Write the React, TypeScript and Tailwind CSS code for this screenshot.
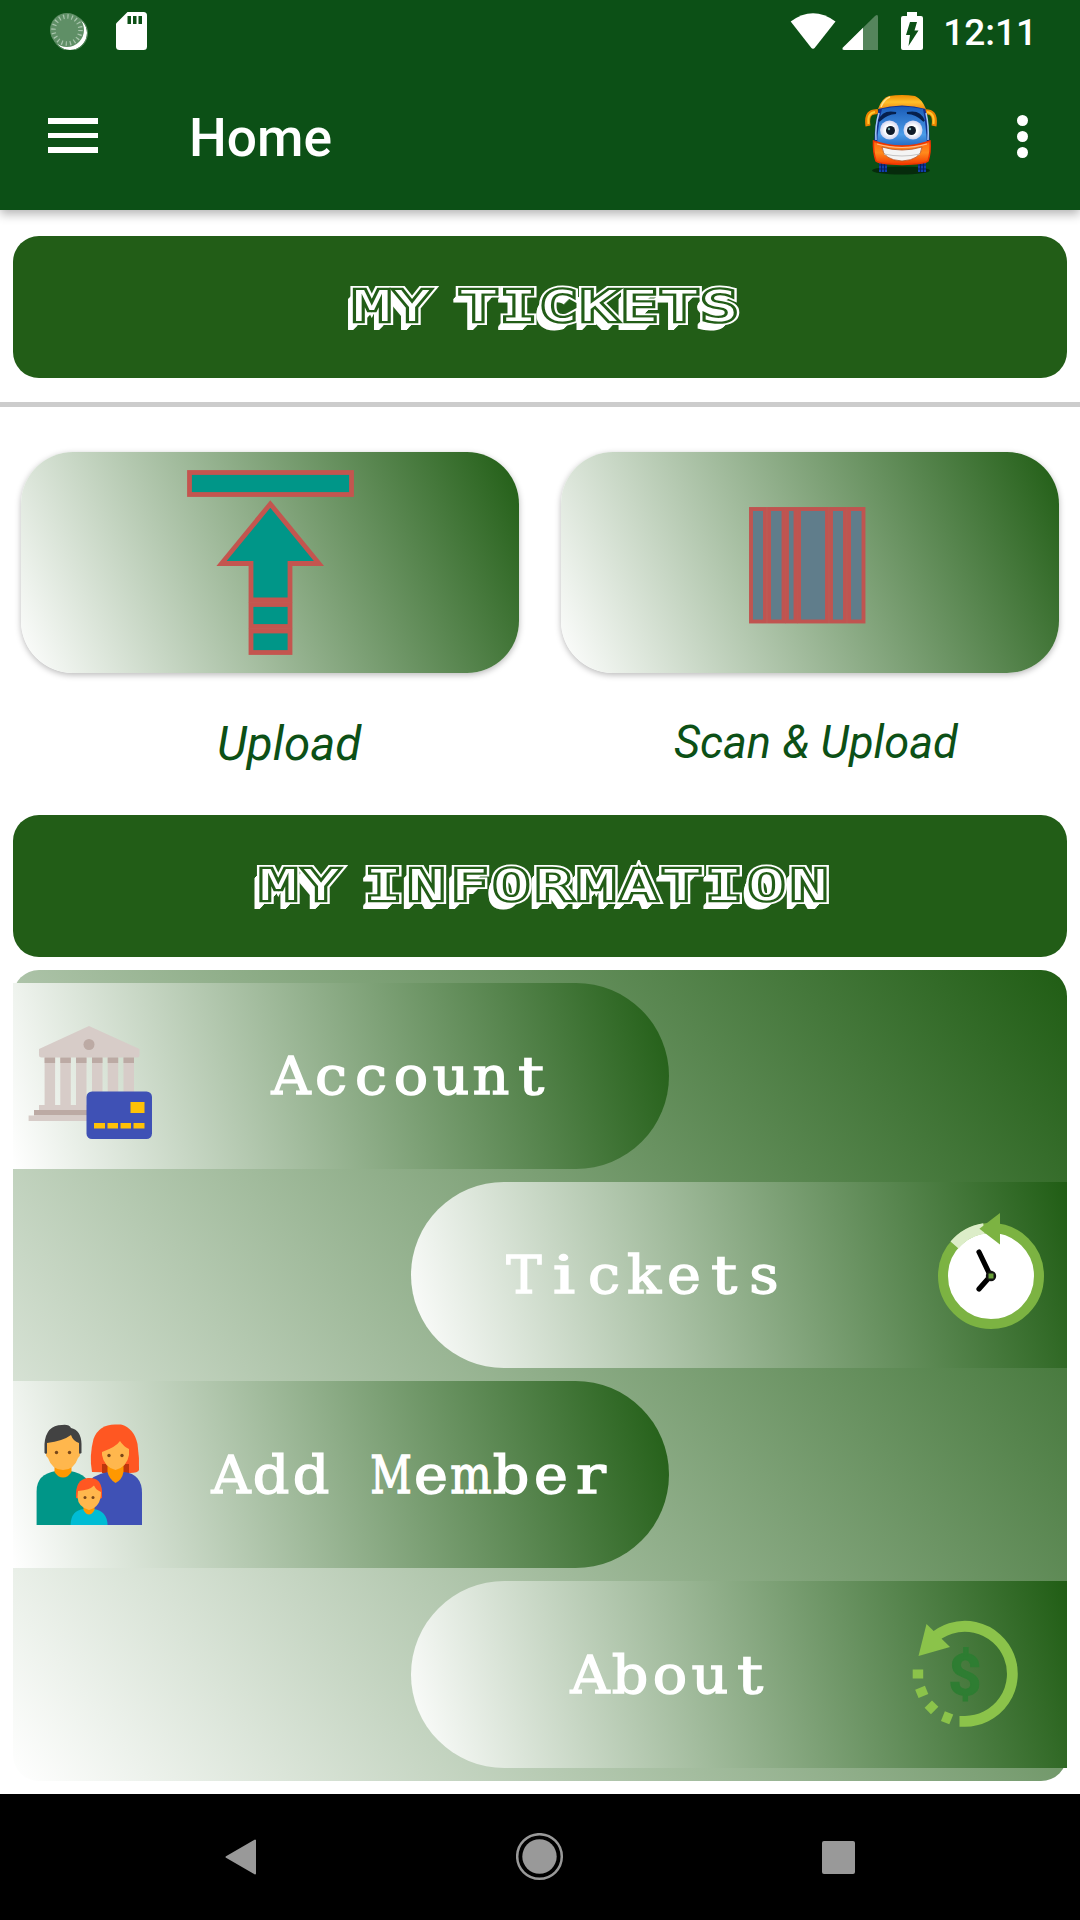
import React from "react";

function StatusBar() {
  return (
    <div className="flex h-[62px] items-center justify-between pl-[50px] pr-[43px]">
      <div className="flex items-center gap-[28px]">
        <svg width="38" height="38" viewBox="50 12 38 38">
          <circle cx="70" cy="33" r="17" fill="#fff" />
          <circle cx="70" cy="33" r="17.5" fill="none" stroke="#5f8f66" strokeWidth="1" />
          <circle cx="67" cy="30" r="17" fill="#5f8f66" />
          <circle cx="67" cy="30" r="13.5" fill="none" stroke="#a9c5ad" strokeWidth="4.5" strokeDasharray="1.2 3.04" />
        </svg>
        <svg width="31" height="38" viewBox="0 0 31 38">
          <path d="M11.5 0H27.5Q31 0 31 3.500V34.500Q31 38 27.500 38H3.500Q0 38 0 34.500V11.500Z" fill="#fff" />
          <path d="M11.500 4h3.500v8h-3.500zM17 4h3.500v8H17zM22.500 4H26v8h-3.500z" fill="#0c5016" />
        </svg>
      </div>
      <div className="flex items-center">
        <svg width="134" height="40" viewBox="791 11 134 40">
          <path d="M791.700 21.500Q814 5 836.500 21.500L816 47.500Q814 50 812 47.500Z" fill="#fff" />
          <path d="M844 47.500L876 16Q879 13.500 879 17V50H845.500Q842.500 50 844 47.500Z" fill="#55855c" />
          <path d="M844 47.500L864 27.800V50H845.500Q842.500 50 844 47.500Z" fill="#fff" />
          <path d="M908 12h10v4h4q2 0 2 2v30q0 2-2 2h-18q-2 0-2-2V18q0-2 2-2h4z" fill="#fff" />
          <path d="M911 22h7l-2.500 8.500h4L909.500 46l1.500-11h-4z" fill="#0c5016" />
        </svg>
        <span className="ml-[19px] mt-[4px] text-[37px] font-medium leading-[44px] text-white">12:11</span>
      </div>
    </div>
  );
}

function BusIcon() {
  return (
    <svg width="74" height="80" viewBox="0 0 74 80">
      <defs>
        <linearGradient id="roof" x1="0" y1="0" x2="0" y2="1">
          <stop offset="0" stopColor="#f08a00" />
          <stop offset=".5" stopColor="#ffc02a" />
          <stop offset="1" stopColor="#f08a10" />
        </linearGradient>
        <linearGradient id="glass" x1="0" y1="0" x2="0" y2="1">
          <stop offset="0" stopColor="#1a5cb8" />
          <stop offset=".7" stopColor="#4a9be8" />
          <stop offset="1" stopColor="#2468c0" />
        </linearGradient>
        <linearGradient id="bumper" x1="0" y1="0" x2="0" y2="1">
          <stop offset="0" stopColor="#ff6a10" />
          <stop offset=".5" stopColor="#ff8a1c" />
          <stop offset="1" stopColor="#f43a00" />
        </linearGradient>
        <radialGradient id="eye">
          <stop offset=".5" stopColor="#fff" />
          <stop offset="1" stopColor="#cfd3f0" />
        </radialGradient>
      </defs>
      <ellipse cx="36" cy="75.500" rx="29" ry="4" fill="#062b0c" />
      <path d="M14 66h8v11h-8zM53 66h8v11h-8z" fill="#123fa8" />
      <path d="M16.500 67v10M19.500 67v10M55.500 67v10M58.500 67v10M14 70h8M14 74h8M53 70h8M53 74h8" stroke="#071f5c" strokeWidth="1" />
      <path d="M3 31Q1 18 9 17l4-.500M69 31Q71 18 63 17l-4-.500" fill="none" stroke="#ed8300" strokeWidth="5" />
      <path d="M3.500 29Q2 18 10 17M68.500 29Q70 18 62 17" fill="none" stroke="#ffc62e" strokeWidth="2" />
      <path d="M14 13Q10 27 9 48h56Q64 27 60 13Q37 7 14 13Z" fill="#112f91" />
      <path d="M17 14Q13 29 12 49Q37 54 62 49Q61 29 58 14Q37 9 17 14Z" fill="url(#glass)" />
      <path d="M13 14Q17 3 24 1Q37-1 50 1Q57 4 61 14Q37 7 13 14Z" fill="url(#roof)" />
      <path d="M16 12Q19 4 25 2" stroke="#ffe08a" strokeWidth="1.500" fill="none" />
      <path d="M14 18Q10 31 11 45M61 18Q64 31 63 45" stroke="#a9cdf5" strokeWidth="1.500" fill="none" />
      <path d="M14 26Q18 15 31 18Q22 18 14 26ZM59 26Q55 15 42 18Q51 18 59 26Z" fill="#06204d" stroke="#06204d" strokeWidth="1.800" />
      <circle cx="24.500" cy="35" r="9.500" fill="url(#eye)" />
      <circle cx="48" cy="35" r="9.500" fill="url(#eye)" />
      <circle cx="25.500" cy="35.500" r="4.500" fill="#101a2a" />
      <circle cx="46.500" cy="35.500" r="4.500" fill="#101a2a" />
      <circle cx="24" cy="34" r="1.200" fill="#7aa" />
      <circle cx="45" cy="34" r="1.200" fill="#7aa" />
      <path d="M8.500 46Q22 51 37 51Q52 51 65 46Q66 57 63 66Q60 69 37 69.500Q14 69 11 66Q8 57 8.500 46Z" fill="url(#bumper)" stroke="#ee3500" strokeWidth="1.500" />
      <path d="M12 49Q24 52.500 37 52.500Q50 52.500 62 49" fill="none" stroke="#ffbb8a" strokeWidth="1.200" />
      <path d="M17 52Q37 58 57 52Q56 65 37 66Q18 65 17 52Z" fill="#f4f4f4" stroke="#b55020" strokeWidth=".8" />
      <path d="M19 59Q37 63 55 59" fill="none" stroke="#c4c4c4" />
    </svg>
  );
}

function AppBar() {
  return (
    <div className="flex h-[148px] items-center pb-[2px] pl-[48px] pr-[52px]">
      <div className="mt-px flex flex-col gap-[9px]">
        <div className="h-[5.500px] w-[50px] bg-white" />
        <div className="h-[5.500px] w-[50px] bg-white" />
        <div className="h-[5.500px] w-[50px] bg-white" />
      </div>
      <h1 className="ml-[91px] mt-[7px] text-[53.300px] font-medium leading-none text-white">Home</h1>
      <div className="ml-auto flex items-center">
        <BusIcon />
        <div className="ml-[78px] mt-[3px] flex flex-col gap-[5px]">
          <div className="size-[11px] rounded-full bg-white" />
          <div className="size-[11px] rounded-full bg-white" />
          <div className="size-[11px] rounded-full bg-white" />
        </div>
      </div>
    </div>
  );
}

/* Block shadow running down and to the left of the banner lettering. */
const extrusion = Array.from({ length: 17 }, (_, i) => `${-(i + 1) * 0.34}px ${(i + 1) * 0.5}px 0 #fff`).join(",");

function Banner({ title, spacing }: { title: string; spacing: string }) {
  return (
    <div className="mx-[13px] flex h-[142px] items-center justify-center rounded-[26px] bg-[#225d17] pl-[14px]">
      <h2
        data-title={title}
        className={`relative scale-x-[1.4] whitespace-pre font-['DejaVu_Sans_Mono',monospace] text-[43.500px] leading-none text-white [-webkit-text-stroke:8px_#fff] after:absolute after:inset-0 after:content-[attr(data-title)] after:[-webkit-text-stroke:4.600px_#225d17] after:[paint-order:stroke_fill] after:[text-shadow:none] ${spacing}`}
        style={{ textShadow: extrusion }}
      >
        {title}
      </h2>
    </div>
  );
}

function UploadIcon() {
  return (
    <svg width="170" height="190" viewBox="185 468 170 190" className="-ml-px">
      <g fill="#009688" stroke="#c4554f" strokeWidth="4.8">
        <rect x="189.500" y="472.500" width="162" height="22" />
        <path d="M270.300 504L319 563.500H290V600H251V563.500H221.500Z" />
        <rect x="251" y="604.500" width="39" height="22" />
        <rect x="251" y="631" width="39" height="21.500" />
      </g>
    </svg>
  );
}

function BarcodeIcon() {
  return (
    <svg width="118" height="118" viewBox="748 506.500 118 118" className="-ml-[7px] mt-[5px]">
      <g fill="#607d8b" stroke="#c05450" strokeWidth="3.9">
        <rect x="751" y="509.500" width="14" height="112.500" />
        <rect x="769" y="509.500" width="14.500" height="112.500" />
        <rect x="787" y="509.500" width="8.500" height="112.500" />
        <rect x="799" y="509.500" width="28" height="112.500" />
        <rect x="831" y="509.500" width="14" height="112.500" />
        <rect x="849" y="509.500" width="14.500" height="112.500" />
      </g>
    </svg>
  );
}

function ActionCard({ children }: { children: React.ReactNode }) {
  return (
    <div className="flex h-[221px] w-[498px] items-center justify-center rounded-[52px] bg-[linear-gradient(66.1deg,#fff,#205d14)] shadow-[0_2px_6px_rgba(0,0,0,0.28)]">
      {children}
    </div>
  );
}

/* Per-letter width correction that fits proportional letters to one typewriter cell. */
const fit: Record<string, string> = {
  M: "scale-x-[0.78]",
  m: "scale-x-[0.84]",
  A: "scale-x-[1.04]",
  T: "scale-x-[1.02]",
  k: "scale-x-[1.08]",
  i: "scale-x-[1.35]",
  t: "scale-x-[1.25]",
  r: "scale-x-[1.2]",
};

function Typewriter({ text }: { text: string }) {
  return (
    <span className="flex font-['DejaVu_Serif',serif] text-[52px] leading-[60px] text-white [-webkit-text-stroke:1.4px_white]">
      {text.split("").map((ch, i) => (
        <span key={i} className={`flex w-[40px] justify-center whitespace-pre ${fit[ch] ?? "scale-x-[1.1]"}`}>
          {ch}
        </span>
      ))}
    </span>
  );
}

function BankIcon() {
  return (
    <svg width="125" height="114" viewBox="28 1026 125 114">
      <path d="M89 1026L139.500 1049V1055Q139.500 1057.500 137 1057.500H41.500Q39 1057.500 39 1055V1049Z" fill="#d7ccc8" />
      <circle cx="89" cy="1044.500" r="5.500" fill="#bcaaa4" />
      {[44.6, 60.3, 76, 92, 107.7, 123.5].map((x) => (
        <g key={x}>
          <rect x={x} y="1057.500" width="10.500" height="48" fill="#d7ccc8" />
          <rect x={x} y="1057.500" width="10.500" height="5.500" fill="#bcaaa4" />
        </g>
      ))}
      <rect x="39" y="1105" width="95" height="5" fill="#d7ccc8" />
      <rect x="34" y="1110" width="95" height="5.500" fill="#bcaaa4" />
      <rect x="28.600" y="1115.500" width="95" height="5.500" fill="#d7ccc8" />
      <rect x="86.500" y="1091.500" width="65.500" height="47.500" rx="5.500" fill="#3f51b5" />
      <rect x="130.500" y="1102" width="14" height="11" fill="#ffc107" />
      <path d="M94 1123h11v5.500H94zM107.500 1123h10.500v5.500h-10.500zM120.500 1123h10.500v5.500h-10.500zM133.500 1123h11v5.500h-11z" fill="#ffc107" />
    </svg>
  );
}

function ClockIcon() {
  return (
    <svg width="108" height="118" viewBox="937 1211 108 118">
      <circle cx="991" cy="1275" r="48" fill="#fff" stroke="#7cb342" strokeWidth="10" />
      <path d="M954.500 1244A48 48 0 0 1 984 1227.500" fill="none" stroke="#dcedc8" strokeWidth="10.500" />
      <path d="M979.400 1227.700L1000 1212V1243.500Z" fill="#7cb342" />
      <path d="M979 1251L990.500 1275L979 1288" fill="none" stroke="#000" strokeWidth="5.200" strokeLinecap="round" strokeLinejoin="round" />
      <circle cx="991" cy="1275" r="5.200" fill="#111" />
      <rect x="988.500" y="1272.500" width="5" height="5" fill="#689f38" />
    </svg>
  );
}

function FamilyIcon() {
  return (
    <svg width="107" height="104" viewBox="36 1422 107 104">
      <path d="M36.600 1524V1490Q36.600 1473 56 1470H70Q90 1473 90 1490V1524Z" fill="#009688" />
      <path d="M92 1471Q89 1455 93.500 1438Q99 1423.500 115 1423.500H121Q134 1427 137.500 1443Q139.500 1457 139 1469Q138 1472 130 1472Z" fill="#ff5722" />
      <path d="M102 1463H129V1472Q120 1478 102 1472Z" fill="#bf360c" />
      <path d="M85 1524V1485Q93 1473 108 1471H124Q142 1473 142 1492V1524Z" fill="#3f51b5" />
      <path d="M107.500 1464H123.500V1471Q122 1479 115.500 1482Q109 1478 107.500 1471Z" fill="#ff9800" />
      <path d="M102 1451Q116 1446 120 1440Q123 1445 129 1448V1454Q127 1466 115.500 1469Q104 1466 102 1454Z" fill="#ffb74d" />
      <path d="M44.500 1452V1443Q46 1424 62 1424Q69 1423 71 1427Q81 1429 81.500 1443V1452L76 1455H49Z" fill="#424242" />
      <path d="M54.500 1463H71.500V1471Q68 1476.500 63 1476.500Q58 1476.500 54.500 1471Z" fill="#ff9800" />
      <path d="M47 1442Q63 1440 71 1434Q73 1440 79 1442V1452Q81.500 1454 78 1457Q74 1469 63 1469Q52 1469 48 1457Q44.500 1454 47 1452Z" fill="#ffb74d" />
      <path d="M76 1497Q75 1478 88 1477Q101 1476 102 1490V1497Q95 1500 76 1497Z" fill="#ff5722" />
      <path d="M70.500 1524Q71 1509 84 1508H94Q107 1510 107.600 1524Z" fill="#00bcd4" />
      <path d="M83.500 1504H94.500V1509Q92 1513.500 89 1513.500Q86 1513.500 83.500 1509Z" fill="#ff9800" />
      <path d="M78 1490Q90 1489 94 1484.500Q96 1489 101 1491Q101 1506 89 1509Q78 1506 77.500 1496Z" fill="#ffb74d" />
      <g fill="#784719">
        <circle cx="56.500" cy="1451.500" r="1.700" />
        <circle cx="69.500" cy="1451.500" r="1.700" />
        <circle cx="109" cy="1454.500" r="1.700" />
        <circle cx="122" cy="1454.500" r="1.700" />
        <circle cx="85" cy="1496.500" r="1.500" />
        <circle cx="93" cy="1496.500" r="1.500" />
      </g>
    </svg>
  );
}

function RefundIcon() {
  return (
    <svg width="108" height="108" viewBox="911 1620 108 108" className="-mt-px">
      <path d="M959.500 1721.300H965A47.500 47.500 0 1 0 932 1639.500" fill="none" stroke="#8bc34a" strokeWidth="10.800" />
      <path d="M926.500 1624L918.500 1656L950 1647Z" fill="#8bc34a" />
      <g fill="#8bc34a">
        <rect x="912.700" y="1669.500" width="10.500" height="9" />
        <rect x="-5" y="-4.500" width="10.500" height="9" transform="translate(921.500 1692) rotate(-22)" />
        <rect x="-5" y="-4.500" width="10.500" height="9" transform="translate(931.300 1707.500) rotate(-45)" />
        <rect x="-5" y="-4.500" width="10.500" height="9" transform="translate(947 1718) rotate(-68)" />
      </g>
      <text x="965" y="1694.500" textAnchor="middle" fontSize="58" fontWeight="700" fontFamily="Roboto, sans-serif" fill="#2e7d32" stroke="#2e7d32" strokeWidth="1">$</text>
    </svg>
  );
}

const pill = "flex w-[656px] shrink-0 items-center bg-[linear-gradient(74.2deg,#fff,#205d14)]";

function InfoPanel() {
  return (
    <div className="mx-[13px] mt-[13px] flex h-[811px] flex-col gap-[13px] rounded-[26px] bg-[linear-gradient(52.4deg,#fff,#205d14)] pt-[13px]">
      <div className={`${pill} h-[186px] rounded-r-full pl-[15px]`}>
        <div className="w-[243px] pt-[13px]"><BankIcon /></div>
        <Typewriter text="Account" />
      </div>
      <div className={`${pill} h-[186px] self-end rounded-l-full pl-[93px]`}>
        <div className="w-[433px]"><Typewriter text="Tickets" /></div>
        <div className="-mt-[9px]"><ClockIcon /></div>
      </div>
      <div className={`${pill} h-[187px] rounded-r-full pl-[23px]`}>
        <div className="w-[175px]"><FamilyIcon /></div>
        <Typewriter text="Add Member" />
      </div>
      <div className={`${pill} h-[187px] self-end rounded-l-full pl-[159px]`}>
        <div className="w-[341px]"><Typewriter text="About" /></div>
        <RefundIcon />
      </div>
    </div>
  );
}

function NavBar() {
  return (
    <div className="mt-[13px] grid h-[126px] grid-cols-3 place-items-center bg-black px-[92px]">
      <svg width="32" height="36" viewBox="0 0 32 36">
        <path d="M30 1.500V34.500L1.500 18Z" fill="#999" stroke="#999" strokeWidth="2" strokeLinejoin="round" />
      </svg>
      <svg width="48" height="48" viewBox="0 0 48 48">
        <circle cx="23.500" cy="23.500" r="22.300" fill="none" stroke="#999" strokeWidth="2.500" />
        <circle cx="23.500" cy="23.500" r="17.200" fill="#999" />
      </svg>
      <div className="size-[33px] rounded-[2px] bg-[#999]" />
    </div>
  );
}

export default function App() {
  return (
    <div className="flex h-[1920px] w-[1080px] flex-col overflow-hidden bg-white font-[Roboto,sans-serif]">
      <header className="h-[210px] shrink-0 bg-[#0c5016] shadow-[0_4px_10px_rgba(0,0,0,0.3)]">
        <StatusBar />
        <AppBar />
      </header>
      <div className="mt-[26px]">
        <Banner title="MY TICKETS" spacing="tracking-[2.500px] [word-spacing:-10px]" />
      </div>
      <div className="mt-[24px] h-[5px] bg-[#ccc]" />
      <div className="mt-[45px] flex gap-[42px] px-[21px]">
        <ActionCard><UploadIcon /></ActionCard>
        <ActionCard><BarcodeIcon /></ActionCard>
      </div>
      <div className="flex h-[142px] text-[#0c5016] italic">
        <div className="w-1/2 pl-[217px] pt-[42px] text-[47.500px] leading-[58px]">Upload</div>
        <div className="w-1/2 pl-[134px] pt-[42px] text-[45.200px] leading-[56px]">Scan &amp; Upload</div>
      </div>
      <Banner title="MY INFORMATION" spacing="tracking-[4.200px] [word-spacing:-16px]" />
      <InfoPanel />
      <NavBar />
    </div>
  );
}
